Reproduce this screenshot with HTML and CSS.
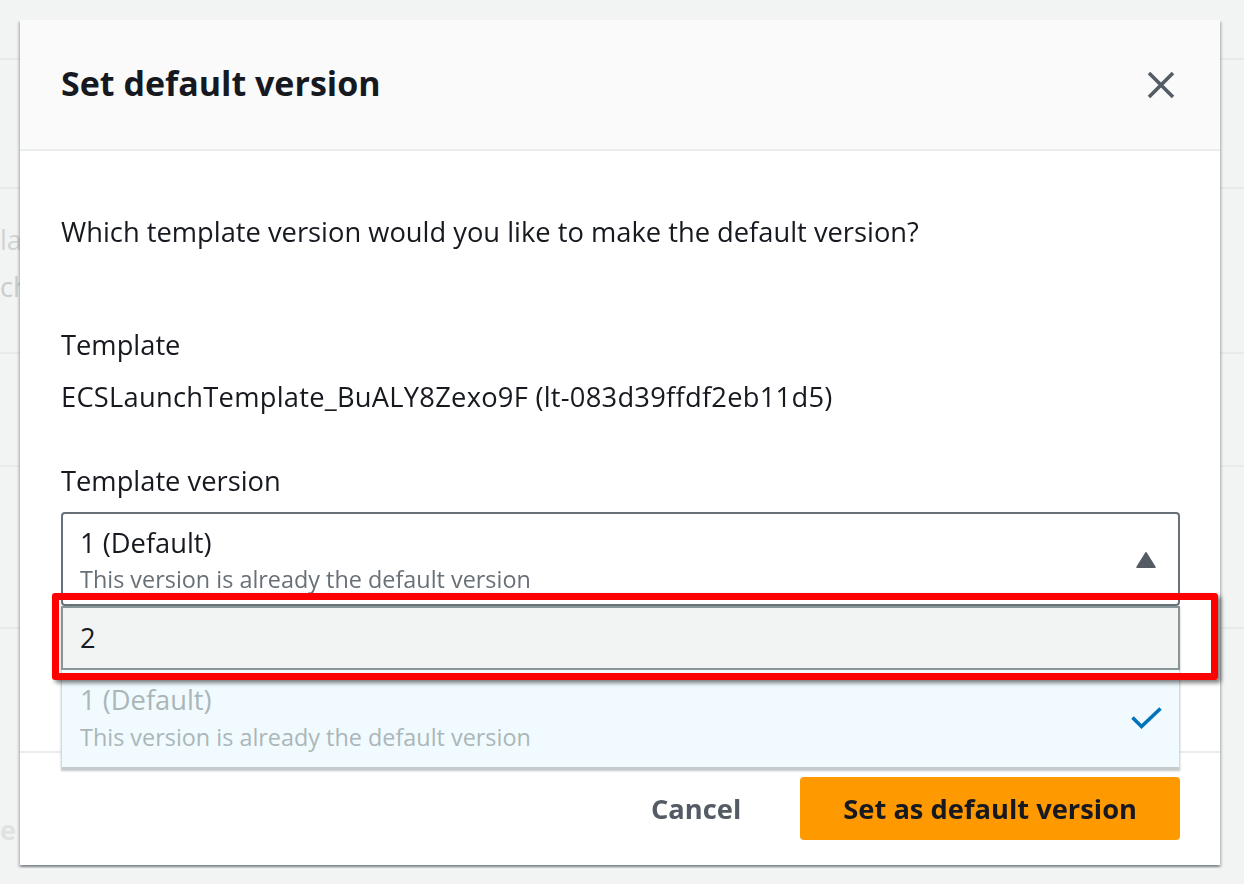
FILE: index.html
```html
<!DOCTYPE html>
<html lang="en">
<head>
<meta charset="utf-8">
<title>Set default version</title>
<link rel="stylesheet" href="styles.css">
</head>
<body>
<div class="page">
  <div class="bg-row r1"></div>
  <div class="bg-row r2"></div>
  <div class="bg-row r3"><span class="ghost g1">lates</span><span class="ghost g2">ch</span></div>
  <div class="bg-row r4"></div>
  <div class="bg-row r5"></div>
  <div class="bg-row r6"><span class="ghost g3">e</span></div>
</div>
<div class="overlay">
  <div class="modal" role="dialog">
    <div class="modal-header">
      <h2 class="modal-title">Set default version</h2>
      <button class="close" aria-label="Close">
        <svg width="28" height="28" viewBox="0 0 28 28"><path d="M2 2 L26 26 M26 2 L2 26" stroke="#545b64" stroke-width="3.6" fill="none"/></svg>
      </button>
    </div>
    <div class="modal-body">
      <p class="prompt">Which template version would you like to make the default version?</p>
      <div class="kv">
        <div class="label">Template</div>
        <div class="value">ECSLaunchTemplate_BuALY8Zexo9F (lt-083d39ffdf2eb11d5)</div>
      </div>
      <div class="field">
        <div class="label">Template version</div>
        <div class="select-wrap">
          <div class="select">
            <div class="opt-text">
              <div class="opt-label">1 (Default)</div>
              <div class="opt-desc">This version is already the default version</div>
            </div>
            <svg class="caret" width="20" height="16" viewBox="-1 -1 22 18"><path d="M10 0 L20 16 L0 16 Z" fill="#545b64" stroke="#545b64" stroke-width="2" stroke-linejoin="round"/></svg>
          </div>
          <ul class="dropdown">
            <li class="option option-hover">2</li>
            <li class="option option-selected">
              <div class="opt-text">
                <div class="opt-label">1 (Default)</div>
                <div class="opt-desc">This version is already the default version</div>
              </div>
              <svg class="check" width="31" height="22" viewBox="0 0 31 22"><polyline points="1.5,10.5 10.5,19.5 29.5,1.5" fill="none" stroke="#0073bb" stroke-width="3.6"/></svg>
            </li>
          </ul>
          <div class="highlight"></div>
        </div>
      </div>
    </div>
    <div class="modal-footer">
      <button class="btn btn-link">Cancel</button>
      <button class="btn btn-primary">Set as default version</button>
    </div>
  </div>
</div>
</body>
</html>
```
FILE: styles.css
```css
* { box-sizing: border-box; }
html, body { margin: 0; padding: 0; }
body {
  width: 1244px;
  height: 884px;
  overflow: hidden;
  background: #f2f3f3;
  font-family: "Open Sans", "Noto Sans", sans-serif;
  color: #16191f;
}

/* faint page behind the modal */
.bg-row { border-bottom: 2px solid #e8eaea; overflow: hidden; }
.r1 { height: 60px; }
.r2 { height: 129px; }
.r3 { height: 165px; padding-top: 27px; }
.r4 { height: 113px; }
.r5 { height: 162px; }
.r6 { height: 255px; padding-top: 177px; border-bottom: 0; }
.ghost { display: block; font-size: 27px; line-height: 47px; color: #cfd3d4; white-space: nowrap; }
.g2 { color: #c9cdce; }
.g3 { font-weight: 700; color: #dfe2e2; }

/* modal */
.overlay {
  position: fixed;
  inset: 0;
  padding: 20px 0 0 20px;
}
.modal {
  width: 1200px;
  background: #fff;
  box-shadow: 0 2px 2px rgba(0, 28, 36, 0.3), 2px 2px 2px rgba(0, 28, 36, 0.15), -2px 2px 2px rgba(0, 28, 36, 0.15);
}
.modal-header {
  display: flex;
  align-items: center;
  justify-content: space-between;
  padding: 39px 45px 42px 41px;
  background: #fafafa;
  border-bottom: 2px solid #eaeded;
}
.modal-title {
  margin: 0;
  font-size: 34px;
  line-height: 48px;
  font-weight: 700;
  color: #16191f;
}
.close {
  display: flex;
  width: 28px;
  height: 28px;
  margin-top: 4px;
  padding: 0;
  border: 0;
  background: none;
}
.modal-body {
  padding: 61px 40px 145px 41px;
  font-size: 27.3px;
  line-height: 39px;
}
.prompt { margin: 0 0 74px; }
.value { margin-top: 13px; letter-spacing: 0.25px; }
.field { margin-top: 45px; }
.select-wrap { position: relative; margin-top: 12px; }
.select {
  display: flex;
  align-items: center;
  justify-content: space-between;
  border: 2px solid #687078;
  border-radius: 4px;
  padding: 9px 22px 8px 17px;
}
.opt-desc {
  font-size: 23.4px;
  line-height: 34px;
  color: #687078;
}
.dropdown {
  position: absolute;
  top: 100%;
  left: 0;
  right: 0;
  margin: 0;
  padding: 0;
  list-style: none;
  z-index: 2;
  box-shadow: 0 2px 2px rgba(0, 28, 36, 0.25);
}
.option-hover {
  background: #f2f3f3;
  border: 2px solid #879596;
  padding: 10px 17px 11px;
}
.option-selected {
  display: flex;
  align-items: center;
  justify-content: space-between;
  background: #f1faff;
  color: #aab7b8;
  padding: 10px 17px 13px 18px;
  border: 1px solid #d5dbdb;
  border-top: 0;
  border-bottom: 2px solid #c6cccc;
}
.option-selected .opt-desc { color: #aab7b8; margin-top: 1px; }
.check { margin-top: 2px; }
.highlight {
  position: absolute;
  left: -9px;
  top: 81px;
  width: 1166px;
  height: 87px;
  border: 7px solid #ff0000;
  border-radius: 3px;
  box-shadow: 3px 3px 4px rgba(0, 0, 0, 0.5);
  z-index: 3;
  pointer-events: none;
}

.modal-footer {
  display: flex;
  justify-content: flex-end;
  gap: 18px;
  padding: 24px 40px 25px;
  border-top: 2px solid #eaeded;
}
.btn {
  font: inherit;
  font-family: "Open Sans", "Noto Sans", sans-serif;
  font-size: 27.3px;
  line-height: 39px;
  font-weight: 700;
  height: 63px;
  border: 0;
  border-radius: 4px;
  cursor: pointer;
}
.btn-link {
  background: none;
  color: #545b64;
  padding: 12px 41px;
}
.btn-primary {
  background: #ff9900;
  color: #16191f;
  padding: 12px 43px;
}
```
